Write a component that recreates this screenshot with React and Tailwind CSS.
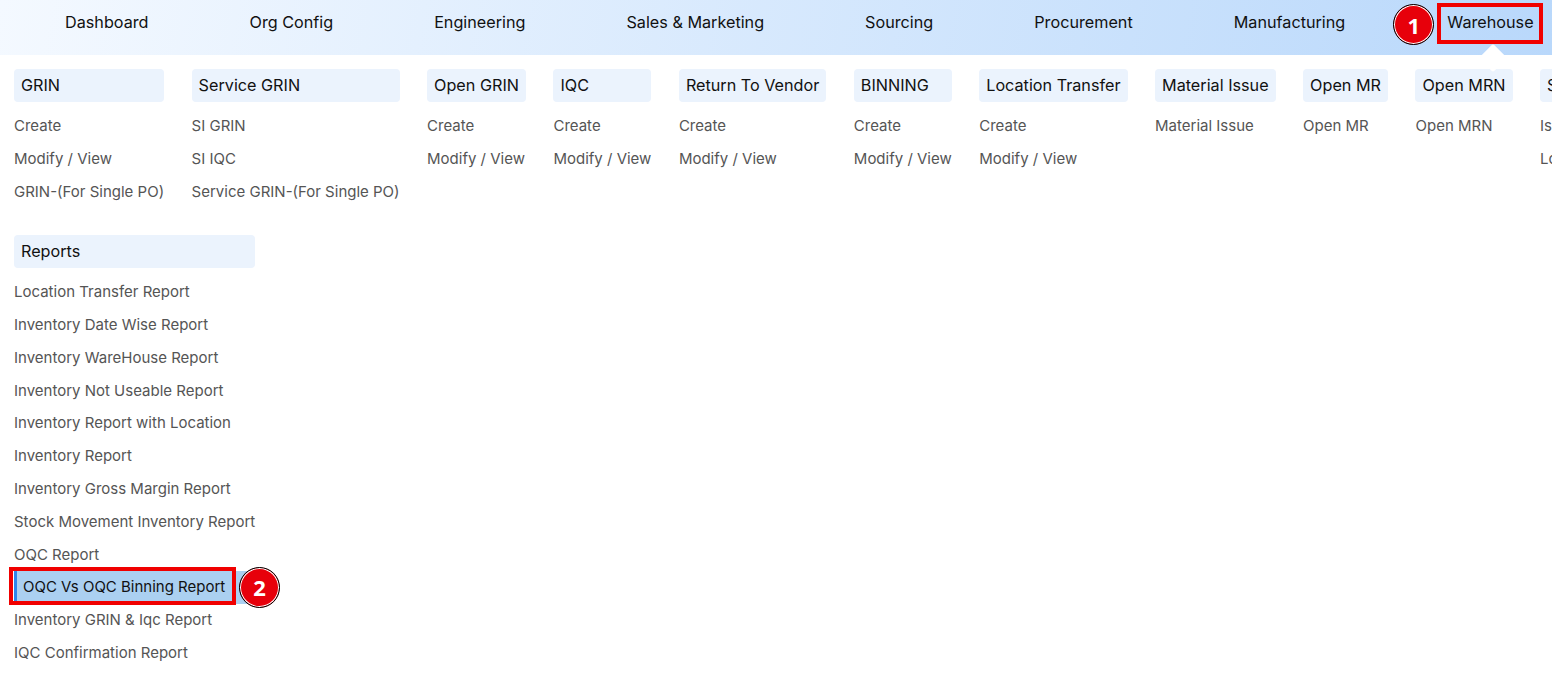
const navItems = [
  'Dashboard',
  'Org Config',
  'Engineering',
  'Sales & Marketing',
  'Sourcing',
  'Procurement',
  'Manufacturing',
]

const columns = [
  { title: 'GRIN', items: ['Create', 'Modify / View', 'GRIN-(For Single PO)'] },
  { title: 'Service GRIN', items: ['SI GRIN', 'SI IQC', 'Service GRIN-(For Single PO)'] },
  { title: 'Open GRIN', items: ['Create', 'Modify / View'] },
  { title: 'IQC', items: ['Create', 'Modify / View'] },
  { title: 'Return To Vendor', items: ['Create', 'Modify / View'] },
  { title: 'BINNING', items: ['Create', 'Modify / View'] },
  { title: 'Location Transfer', items: ['Create', 'Modify / View'] },
  { title: 'Material Issue', items: ['Material Issue'] },
  { title: 'Open MR', items: ['Open MR'] },
  { title: 'Open MRN', items: ['Open MRN'] },
  { title: 'Stock Adjustment', items: ['Issue', 'Location'] },
]

const reports = [
  'Location Transfer Report',
  'Inventory Date Wise Report',
  'Inventory WareHouse Report',
  'Inventory Not Useable Report',
  'Inventory Report with Location',
  'Inventory Report',
  'Inventory Gross Margin Report',
  'Stock Movement Inventory Report',
  'OQC Report',
  'OQC Vs OQC Binning Report',
  'Inventory GRIN & Iqc Report',
  'IQC Confirmation Report',
]

function Badge({ n, className }) {
  return (
    <span
      className={`absolute flex h-[41px] w-[41px] items-center justify-center rounded-full border border-black bg-red-600 text-[22px] font-bold text-white shadow-[inset_0_0_0_1px_#fff] font-['Open_Sans',sans-serif] ${className}`}
    >
      {n}
    </span>
  )
}

function MenuColumn({ title, items, active }) {
  return (
    <div className="shrink-0">
      <div className="mb-[8px] h-[33px] rounded bg-[#ebf3fd] px-[7px] text-[16.2px] leading-[33px] text-[#111]">
        {title}
      </div>
      {items.map((item) =>
        item === active ? (
          <div key={item} className="relative">
            <div className="h-[32.8px] border-l-[3px] border-[#2f86eb] bg-[#abd0f1] pl-[6px] text-[15px] leading-[32.8px] text-[#111]">
              {item}
            </div>
            <div className="absolute -left-[5px] -top-[4px] h-[38px] w-[227px] border-4 border-[#f00000]" />
            <Badge n="2" className="left-[225px] -top-[4px]" />
          </div>
        ) : (
          <div key={item} className="h-[32.8px] text-[15px] leading-[32.8px] whitespace-nowrap text-[#555]">
            {item}
          </div>
        ),
      )}
    </div>
  )
}

export default function App() {
  return (
    <div className="h-[676px] w-[1552px] overflow-hidden bg-white font-['Inter',sans-serif]">
      {/* NAV */}
      <nav className="flex h-[55px] items-center gap-[101px] bg-[linear-gradient(100deg,#f4f9ff,#b9d8fb)] pb-[11px] pl-[65px] text-[16.2px] leading-6 text-[#111]">
        {navItems.map((item) => (
          <span key={item} className="whitespace-nowrap">
            {item}
          </span>
        ))}
        <span className="relative ml-px whitespace-nowrap">
          Warehouse
          <span className="absolute -left-[10px] -top-[7px] h-[41px] w-[106px] border-4 border-[#f00000]" />
          <Badge n="1" className="-left-[54px] -top-[6px]" />
          <span className="absolute left-[36px] top-[38px] h-5 w-5 rotate-45 rounded-[2px] bg-white" />
        </span>
      </nav>

      {/* MENU */}
      <div className="flex gap-[27.5px] pl-[14px] pt-[14px]">
        {columns.map((col) => (
          <MenuColumn key={col.title} title={col.title} items={col.items} />
        ))}
      </div>

      <div className="mt-[26.8px] flex pl-[14px]">
        <MenuColumn title="Reports" items={reports} active="OQC Vs OQC Binning Report" />
      </div>
    </div>
  )
}
